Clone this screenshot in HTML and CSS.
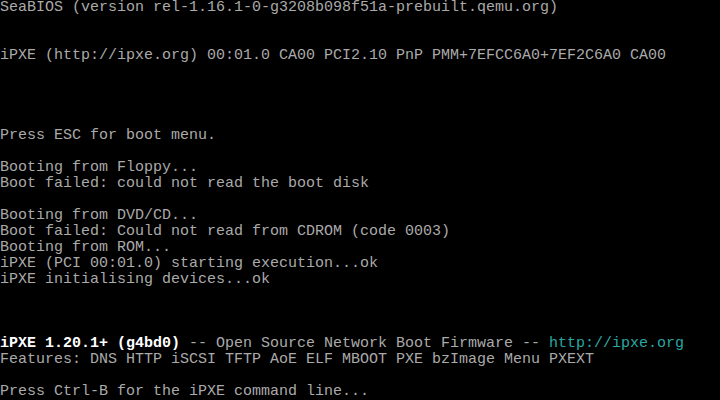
FILE: index.html
```html
<!DOCTYPE html>
<html>
<head>
<meta charset="utf-8">
<link rel="stylesheet" href="styles.css">
</head>
<body>
<pre class="console">SeaBIOS (version rel-1.16.1-0-g3208b098f51a-prebuilt.qemu.org)


iPXE (http://ipxe.org) 00:01.0 CA00 PCI2.10 PnP PMM+7EFCC6A0+7EF2C6A0 CA00




Press ESC for boot menu.

Booting from Floppy...
Boot failed: could not read the boot disk

Booting from DVD/CD...
Boot failed: Could not read from CDROM (code 0003)
Booting from ROM...
iPXE (PCI 00:01.0) starting execution...ok
iPXE initialising devices...ok



<span class="hi">iPXE 1.20.1+ (g4bd0)</span> -- Open Source Network Boot Firmware -- <span class="link">http://ipxe.org</span>
Features: DNS HTTP iSCSI TFTP AoE ELF MBOOT PXE bzImage Menu PXEXT

Press Ctrl-B for the iPXE command line...</pre>
</body>
</html>
```
FILE: styles.css
```css
html, body {
  margin: 0;
  padding: 0;
  background: #000;
}
body {
  width: 720px;
  height: 400px;
  overflow: hidden;
}
.console {
  margin: 0;
  font-family: "Liberation Mono", "DejaVu Sans Mono", monospace;
  font-size: 15px;
  line-height: 16px;
  color: #aaaaaa;
  white-space: pre;
}
.hi {
  color: #ffffff;
  font-weight: bold;
}
.link {
  color: #2aa7a0;
}
```
